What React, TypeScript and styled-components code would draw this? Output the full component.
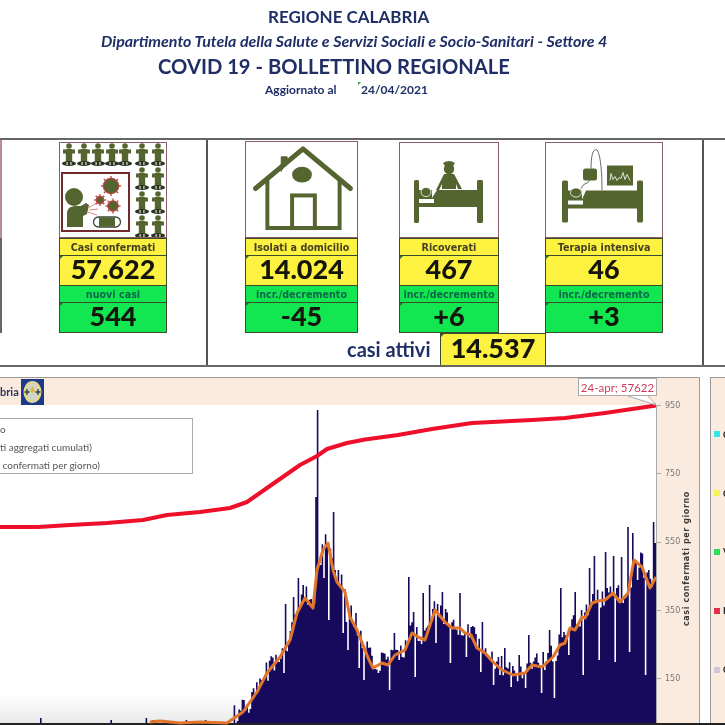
import React from "react";
import styled, { createGlobalStyle } from "styled-components";

const GlobalStyle = createGlobalStyle`
  html, body {
    margin: 0;
    padding: 0;
    background: #fff;
    overflow: hidden;
  }
`;

const OLIVE = "#55652f";
const NAVY = "#1f2f66";
const PEACH = "#fbebde";

const Page = styled.div`
  width: 725px;
  height: 725px;
  display: flex;
  flex-direction: column;
  overflow: hidden;
  background: #fff;
  font-family: Lato, "Liberation Sans", sans-serif;
  filter: blur(0.6px);
`;

const Header = styled.header`
  height: 138px;
  padding-top: 4px;
  box-sizing: border-box;
  color: ${NAVY};
`;
const HeadLine = styled.div<{ $left: number; $h: number; $size: number; $italic?: boolean }>`
  display: flex;
  align-items: center;
  height: ${(p) => p.$h}px;
  margin-left: ${(p) => p.$left}px;
  font-size: ${(p) => p.$size}px;
  font-weight: 700;
  font-style: ${(p) => (p.$italic ? "italic" : "normal")};
  white-space: nowrap;
`;
const UpdatedLabel = styled.span`
  width: 96px;
`;
const DateMark = styled.span`
  position: relative;
  &::before {
    content: "";
    position: absolute;
    left: -3px;
    top: 0;
    border-top: 3px solid #2f9a3c;
    border-right: 3px solid transparent;
  }
`;

const StatsBand = styled.section`
  display: grid;
  grid-template-columns: 206px 496px 1fr;
  height: 229px;
  box-sizing: border-box;
  border-top: 2px solid #666;
  border-bottom: 2px solid #666;
`;
const Cell = styled.div`
  display: flex;
  align-items: flex-start;
  & + & {
    border-left: 2px solid #555;
  }
`;
const CellColumn = styled(Cell)`
  flex-direction: column;
`;
const Stub = styled.div`
  width: 2px;
  height: 193px;
  flex: none;
  background: linear-gradient(#b58f98 0 98px, #666 98px);
`;
const CardRow = styled.div`
  display: flex;
  align-items: flex-end;
  height: 193px;
  padding-left: 37px;
`;
const Card = styled.div<{ $w: number; $ml?: number }>`
  width: ${(p) => p.$w}px;
  margin-left: ${(p) => p.$ml ?? 0}px;
  flex: none;
`;
const Picture = styled.div<{ $h: number }>`
  height: ${(p) => p.$h}px;
  box-sizing: border-box;
  border: 1px solid #8a5d66;
  background: #fff;
  svg {
    display: block;
    width: 100%;
    height: 100%;
  }
`;
const Label = styled.div<{ $green?: boolean; $h: number }>`
  height: ${(p) => p.$h}px;
  box-sizing: border-box;
  display: flex;
  align-items: center;
  justify-content: center;
  border: 1px solid #3a4a2a;
  border-top-width: 0;
  background: ${(p) => (p.$green ? "#12e650" : "#fdf23f")};
  color: ${(p) => (p.$green ? "#0a6a48" : "#444020")};
  font-family: "DejaVu Sans", sans-serif;
  font-size: 9.6px;
  font-weight: 700;
  white-space: nowrap;
`;
const TopLabel = styled(Label)`
  border-top-width: 1px;
`;
const Value = styled.div<{ $green?: boolean }>`
  position: relative;
  height: 30px;
  box-sizing: border-box;
  display: flex;
  align-items: center;
  justify-content: center;
  padding-bottom: 4px;
  border: 1px solid #3a4a2a;
  border-top-width: 0;
  background: ${(p) => (p.$green ? "#12e650" : "#fdf23f")};
  color: #15150c;
  font-size: 27px;
  font-weight: 900;
  &::before {
    content: "";
    position: absolute;
    left: 0;
    top: 0;
    border-top: 3px solid #2c6b35;
    border-right: 3px solid transparent;
  }
`;
const ActiveRow = styled.div`
  display: flex;
  align-items: center;
  height: 32px;
`;
const ActiveLabel = styled.span`
  margin-left: 139px;
  width: 93px;
  font-size: 20px;
  font-weight: 700;
  color: ${NAVY};
`;
const ActiveValue = styled(Value)`
  width: 106px;
  height: 32px;
  border-top-width: 1px;
  border-bottom-width: 0;
`;

const ChartRow = styled.section`
  flex: 1;
  display: flex;
  margin-top: 10px;
  min-height: 0;
  border-bottom: 2px solid #222;
`;
const ChartPanel = styled.div`
  position: relative;
  width: 700px;
  flex: none;
  box-sizing: border-box;
  border-top: 1px solid #999;
  border-right: 1px solid #999;
  background: ${PEACH};
`;
const TitleBand = styled.div`
  height: 27px;
  display: flex;
  align-items: center;
  gap: 2px;
  font-size: 11px;
  font-weight: 700;
  color: #2c3560;
`;
const ChartBody = styled.div`
  display: flex;
`;
const Plot = styled.svg`
  display: block;
  flex: none;
  width: 656px;
  height: 318px;
  background: #fff;
  overflow: visible;
`;
const Axis = styled.div`
  position: relative;
  flex: 1;
  border-left: 1px solid #aaa;
  height: 318px;
`;
const TickList = styled.div`
  margin-top: -34px;
`;
const Tick = styled.div`
  position: relative;
  height: 68.33px;
  display: flex;
  align-items: center;
  padding-left: 8px;
  font-family: "DejaVu Sans", sans-serif;
  font-size: 8px;
  color: #777;
  &::before {
    content: "";
    position: absolute;
    left: 0;
    top: 50%;
    width: 4px;
    border-top: 1px solid #aaa;
  }
`;
const AxisTitle = styled.div`
  position: absolute;
  left: 25px;
  top: 121px;
  height: 100px;
  writing-mode: vertical-rl;
  transform: rotate(180deg);
  text-align: center;
  font-family: "DejaVu Sans", sans-serif;
  font-size: 8px;
  letter-spacing: 0.6px;
  font-weight: 700;
  color: #3a3a3a;
  white-space: nowrap;
`;
const Callout = styled.div`
  position: absolute;
  left: 578px;
  top: 0;
  width: 79px;
  height: 18px;
  box-sizing: border-box;
  display: flex;
  align-items: center;
  justify-content: center;
  border: 1px solid #aaa;
  background: #fff;
  color: #d23a5c;
  font-size: 11.5px;
  white-space: nowrap;
`;
const Legend = styled.div`
  position: absolute;
  left: -1px;
  top: 40px;
  width: 194px;
  height: 56px;
  box-sizing: border-box;
  padding-top: 1px;
  border: 1px solid #aaa;
  background: #fff;
  font-size: 10px;
  line-height: 18px;
  color: #555;
  white-space: nowrap;
`;
const SidePanel = styled.div`
  flex: 1;
  margin-left: 10px;
  padding-top: 27px;
  border-top: 1px solid #999;
  border-left: 1px solid #999;
  background: ${PEACH};
  overflow: hidden;
`;
const SideRow = styled.div`
  display: flex;
  align-items: center;
  gap: 3px;
  height: 58.8px;
  padding-left: 3px;
  font-size: 9px;
  font-weight: 700;
  color: #222;
  white-space: nowrap;
`;
const Swatch = styled.i<{ $color: string }>`
  width: 6px;
  height: 6px;
  flex: none;
  background: ${(p) => p.$color};
`;

type Pt = [number, number];

const RED_LINE: Pt[] = [
  [0, 527], [38, 527], [70, 525], [107, 523], [143, 520], [167, 515], [200, 512], [230, 508], [247, 502],
  [267, 488], [300, 465], [317, 456], [327, 449], [347, 443], [365, 439.5], [398, 435], [432, 429], [472, 423],
  [532, 420], [565, 418], [605, 413], [656, 405.5],
];
const ORANGE_LINE: Pt[] = [
  [150, 722], [160, 721], [180, 723], [200, 722], [227, 723], [243, 712], [257, 692], [267, 673], [280, 657],
  [290, 640], [297, 613], [305, 598], [313, 608], [317, 570], [323, 550], [328, 543], [333, 570], [337, 582],
  [345, 592], [350, 617], [357, 630], [365, 650], [369, 660], [373, 668], [382, 663], [388, 665], [395, 655],
  [405, 650], [412, 633], [418, 637], [425, 640], [435, 610], [445, 622], [452, 628], [460, 628], [465, 633],
  [471, 635], [477, 648], [485, 653], [493, 662], [502, 670], [513, 675], [525, 673], [532, 665], [542, 667],
  [553, 657], [560, 645], [565, 643], [570, 628], [575, 630], [582, 617], [585, 618], [592, 603], [598, 601],
  [605, 600], [613, 593], [620, 602], [628, 593], [634, 560], [642, 567], [650, 588], [656, 577],
];
// bars that stand out from the body, read off the picture
const SPIKES: Pt[] = [
  [40, 718], [110, 720], [145, 718], [152, 720], [186, 720], [205, 720],
  [283, 673], [285, 604], [293, 597], [298, 578], [303, 585], [315, 497], [317, 410], [323, 578], [328, 620],
  [332, 512], [337, 570], [342, 633], [345, 622], [347, 650], [355, 613], [358, 668], [363, 680],
  [382, 653], [388, 690], [393, 633], [402, 657], [408, 577], [412, 612], [415, 677], [422, 593], [429, 585],
  [435, 643], [442, 592], [450, 663], [459, 593], [465, 657], [470, 627], [480, 672], [482, 622], [492, 685],
  [498, 657], [504, 648], [510, 687], [518, 655], [525, 688], [528, 635], [540, 693], [543, 652], [549, 630],
  [554, 698], [560, 588], [568, 655], [575, 592], [583, 675], [589, 568], [594, 556], [598, 660], [604, 552],
  [612, 556], [615, 662], [621, 557], [627, 527], [629, 652], [632, 533], [637, 580], [644, 675], [648, 570],
  [652, 522], [655, 543],
];
const BASE_Y = 723;
const BAR_W = 1.6;

const interp = (pts: Pt[], x: number) => {
  for (let i = 1; i < pts.length; i++) {
    if (x <= pts[i][0]) {
      const [x0, y0] = pts[i - 1];
      const [x1, y1] = pts[i];
      return y0 + ((y1 - y0) * (x - x0)) / (x1 - x0);
    }
  }
  return pts[pts.length - 1][1];
};

const toPoints = (pts: Pt[]) => pts.map((p) => p.join(",")).join(" ");

const buildBars = () => {
  let seed = 4211;
  const rnd = () => {
    seed = (seed * 16807) % 2147483647;
    return seed / 2147483647;
  };
  const tops: number[] = [];
  for (let x = 0; x < 656; x += BAR_W) {
    if (x < 232) tops.push(BASE_Y);
    else {
      const body = interp(ORANGE_LINE, x) - 3 + (rnd() - 0.5) * 22;
      tops.push(Math.min(BASE_Y, body));
    }
  }
  SPIKES.forEach(([x, y]) => {
    tops[Math.round(x / BAR_W)] = y;
  });
  let d = `M0,${BASE_Y}`;
  tops.forEach((t, i) => {
    const x = (i * BAR_W).toFixed(1);
    d += `L${x},${t.toFixed(1)}L${(i * BAR_W + BAR_W).toFixed(1)},${t.toFixed(1)}`;
  });
  return `${d}L656,${BASE_Y}Z`;
};

const Figure = ({ x, y }: { x: number; y: number }) => (
  <g>
    <circle cx={x} cy={y + 3} r={2.8} fill={OLIVE} />
    <rect x={x - 3.2} y={y + 6} width={6.4} height={13} fill={OLIVE} />
    <rect x={x - 6} y={y + 6.5} width={12} height={4} fill={OLIVE} />
    <ellipse cx={x} cy={y + 20.5} rx={7} ry={2.6} fill="#2a3320" />
    <rect x={x - 2.5} y={y + 19} width={1.2} height={3} fill="#dfe2d6" />
    <rect x={x + 1.3} y={y + 19} width={1.2} height={3} fill="#dfe2d6" />
  </g>
);

const Virus = ({ x, y, r }: { x: number; y: number; r: number }) => (
  <g>
    {[0, 45, 90, 135, 180, 225, 270, 315].map((a) => (
      <line
        key={a}
        x1={x}
        y1={y}
        x2={x + Math.cos((a * Math.PI) / 180) * (r + 2.6)}
        y2={y + Math.sin((a * Math.PI) / 180) * (r + 2.6)}
        stroke="#b8423f"
        strokeWidth={1.3}
      />
    ))}
    <circle cx={x} cy={y} r={r + 0.8} fill="#b8423f" />
    <circle cx={x} cy={y} r={r - 0.6} fill={OLIVE} />
  </g>
);

const CasesIcon = () => (
  <svg viewBox="0 0 106 94">
    {[9, 24, 38, 52, 65, 82, 98].map((x) => (
      <Figure key={x} x={x} y={0} />
    ))}
    {[24, 48, 72].map((y) => (
      <g key={y}>
        <Figure x={82} y={y} />
        <Figure x={98} y={y} />
      </g>
    ))}
    <rect x={2} y={30} width={67} height={58} fill="#fff" stroke="#73282e" strokeWidth={2} />
    <circle cx={14} cy={54} r={9} fill={OLIVE} />
    <path d="M7,84 V69 Q8,63 16,63 H21 L26,60 L29,62 L27,71 L23,73 V84 Z" fill={OLIVE} />
    <path d="M28,65 L37,60 M29,67 L38,66 M28,69 L37,72" stroke="#e8868a" strokeWidth={1} />
    <Virus x={51} y={43} r={7.5} />
    <Virus x={40} y={57} r={3.5} />
    <Virus x={53} y={63} r={5} />
    <rect x={33.5} y={74} width={27} height={10} rx={5} fill="#fff" stroke="#3c4433" strokeWidth={1.3} />
    <rect x={39} y={74.5} width={16} height={9} fill={OLIVE} />
  </svg>
);

const HouseIcon = () => (
  <svg viewBox="0 0 111 96">
    <path d="M35,30 V15 H41 V20" fill={OLIVE} stroke={OLIVE} strokeWidth={1} />
    <path d="M9,47 L57,7 L105,47" fill="none" stroke={OLIVE} strokeWidth={5} strokeLinecap="round" strokeLinejoin="round" />
    <path d="M21,37 V87 H94 V37" fill="none" stroke={OLIVE} strokeWidth={4} />
    <ellipse cx={56} cy={33} rx={10} ry={8} fill={OLIVE} />
    <rect x={46} y={54} width={23} height={33} fill="none" stroke={OLIVE} strokeWidth={4} />
  </svg>
);

const NurseIcon = () => (
  <svg viewBox="0 0 98 94">
    <rect x={14} y={37} width={5} height={43} rx={1.5} fill={OLIVE} />
    <rect x={77} y={37} width={6} height={43} rx={1.5} fill={OLIVE} />
    <path d="M19,47 H32 V55 L37,47 H77 V64 H19 Z" fill={OLIVE} />
    <path d="M19,56 H34 V60 H19 Z" fill="#fff" />
    <ellipse cx={26} cy={49} rx={5} ry={4.6} fill={OLIVE} stroke="#fff" strokeWidth={0.8} />
    <circle cx={49} cy={26} r={5.2} fill={OLIVE} />
    <path d="M43,20 Q49,16 55,20 L53,23 H45 Z" fill={OLIVE} />
    <path d="M44,31 H54 L62,46 H58 L56,41 V46 H42 V41 L39,47 H36 Z" fill={OLIVE} />
  </svg>
);

const IcuIcon = () => (
  <svg viewBox="0 0 116 93">
    <rect x={16} y={37} width={6} height={42} rx={1.5} fill={OLIVE} />
    <rect x={91} y={37} width={6} height={42} rx={1.5} fill={OLIVE} />
    <path d="M22,47 H36 V56 L40,47 H91 V65 H22 Z" fill={OLIVE} />
    <path d="M22,57 H37 V61 H22 Z" fill="#fff" />
    <ellipse cx={30} cy={49} rx={5.5} ry={4.6} fill={OLIVE} stroke="#fff" strokeWidth={0.8} />
    <rect x={37} y={25} width={14} height={12} rx={2.5} fill={OLIVE} />
    <path d="M35,45 Q37,40 42,39 L44,36" fill="none" stroke="#666b5a" strokeWidth={1} />
    <path d="M45,25 C45,12 47,6 50,6 C53,6 56,20 56,47" fill="none" stroke="#666b5a" strokeWidth={1} />
    <rect x={61} y={22} width={26} height={20} fill={OLIVE} />
    <path d="M64,37 L65,30 L67,36 L69,33 L71,37 L73,34 L75,35 L77,29 L79,36 L81,31 L84,37" fill="none" stroke="#fff" strokeWidth={0.8} />
  </svg>
);

const RegionLogo = () => (
  <svg width="23" height="26" viewBox="0 0 23 26">
    <rect width="23" height="26" fill="#1c3a8c" />
    <ellipse cx="11.5" cy="13" rx="9" ry="11" fill="#e9d789" />
    <path d="M11.5,2 L20,13 L11.5,24 L3,13 Z" fill="#cdd6c8" />
    <path d="M11.5,7 L14,12 L11.5,14 L9,12 Z" fill="#e0b63c" />
    <path d="M6,10 V16 M3.5,13 H8.5 M17,10 V16 M14.5,13 H19.5" stroke="#33402e" strokeWidth="1.3" />
  </svg>
);

type Stat = {
  title: string;
  total: string;
  delta: string;
  deltaTitle: string;
  width: number;
  offset?: number;
  height: number;
  icon: React.ReactNode;
};

const domicile: Stat[] = [
  { title: "Isolati a domicilio", total: "14.024", delta: "-45", deltaTitle: "incr./decremento", width: 113, height: 97, icon: <HouseIcon /> },
  { title: "Ricoverati", total: "467", delta: "+6", deltaTitle: "incr./decremento", width: 100, offset: 41, height: 96, icon: <NurseIcon /> },
  { title: "Terapia intensiva", total: "46", delta: "+3", deltaTitle: "incr./decremento", width: 118, offset: 46, height: 96, icon: <IcuIcon /> },
];

const StatCard = ({ stat }: { stat: Stat }) => (
  <Card $w={stat.width} $ml={stat.offset}>
    <Picture $h={stat.height}>{stat.icon}</Picture>
    <TopLabel $h={18}>{stat.title}</TopLabel>
    <Value>{stat.total}</Value>
    <Label $green $h={17}>{stat.deltaTitle}</Label>
    <Value $green>{stat.delta}</Value>
  </Card>
);

const provinces: [string, string][] = [
  ["#2fe8e8", "Cosenza"],
  ["#f7f25a", "Catanzaro"],
  ["#2fdc5e", "Vibo Valentia"],
  ["#e0314a", "Reggio Calabria"],
  ["#cfc6de", "Crotone"],
];

const bars = buildBars();

const App = () => (
  <Page>
    <GlobalStyle />
    <Header>
      <HeadLine $left={268} $h={24} $size={17}>REGIONE CALABRIA</HeadLine>
      <HeadLine $left={101} $h={24} $size={16} $italic>
        Dipartimento Tutela della Salute e Servizi Sociali e Socio-Sanitari - Settore 4
      </HeadLine>
      <HeadLine $left={158} $h={28} $size={20.2}>COVID 19 - BOLLETTINO REGIONALE</HeadLine>
      <HeadLine $left={265} $h={18} $size={12}>
        <UpdatedLabel>Aggiornato al</UpdatedLabel>
        <DateMark>24/04/2021</DateMark>
      </HeadLine>
    </Header>

    <StatsBand>
      <Cell>
        <Stub />
        <CardRow>
          <Card $w={108} $ml={20}>
            <Picture $h={96}><CasesIcon /></Picture>
            <TopLabel $h={18}>Casi confermati</TopLabel>
            <Value>57.622</Value>
            <Label $green $h={17}>nuovi casi</Label>
            <Value $green>544</Value>
          </Card>
        </CardRow>
      </Cell>
      <CellColumn>
        <CardRow>
          {domicile.map((s) => (
            <StatCard key={s.title} stat={s} />
          ))}
        </CardRow>
        <ActiveRow>
          <ActiveLabel>casi attivi</ActiveLabel>
          <ActiveValue>14.537</ActiveValue>
        </ActiveRow>
      </CellColumn>
      <Cell />
    </StatsBand>

    <ChartRow>
      <ChartPanel>
        <TitleBand>
          bria
          <RegionLogo />
        </TitleBand>
        <ChartBody>
          <Plot viewBox={`0 405 656 318`}>
            <defs>
              <linearGradient id="fade" x1="0" y1="0" x2="0" y2="1">
                <stop offset="0" stopColor="#fff" />
                <stop offset="1" stopColor="#e9e9e9" />
              </linearGradient>
            </defs>
            <rect x="0" y="695" width="656" height="28" fill="url(#fade)" />
            <path d={bars} fill="#170a5c" />
            <polyline points={toPoints(ORANGE_LINE)} fill="none" stroke="#e2752c" strokeWidth="3" strokeLinejoin="round" />
            <polyline points={toPoints(RED_LINE)} fill="none" stroke="#ee0f2b" strokeWidth="4" strokeLinejoin="round" />
            <path d="M628,396 L656,405 L648,396" fill="#fff" stroke="#aaa" strokeWidth="1" />
          </Plot>
          <Axis>
            <TickList>
              <Tick>950</Tick>
              <Tick>750</Tick>
              <Tick>550</Tick>
              <Tick>350</Tick>
              <Tick>150</Tick>
            </TickList>
            <AxisTitle>casi confermati per giorno</AxisTitle>
          </Axis>
        </ChartBody>
        <Callout>24-apr; 57622</Callout>
        <Legend>
          <div>o</div>
          <div>ti aggregati cumulati)</div>
          <div>&nbsp;confermati per giorno)</div>
        </Legend>
      </ChartPanel>
      <SidePanel>
        {provinces.map(([color, name]) => (
          <SideRow key={name}>
            <Swatch $color={color} />
            {name}
          </SideRow>
        ))}
      </SidePanel>
    </ChartRow>
  </Page>
);

export default App;
